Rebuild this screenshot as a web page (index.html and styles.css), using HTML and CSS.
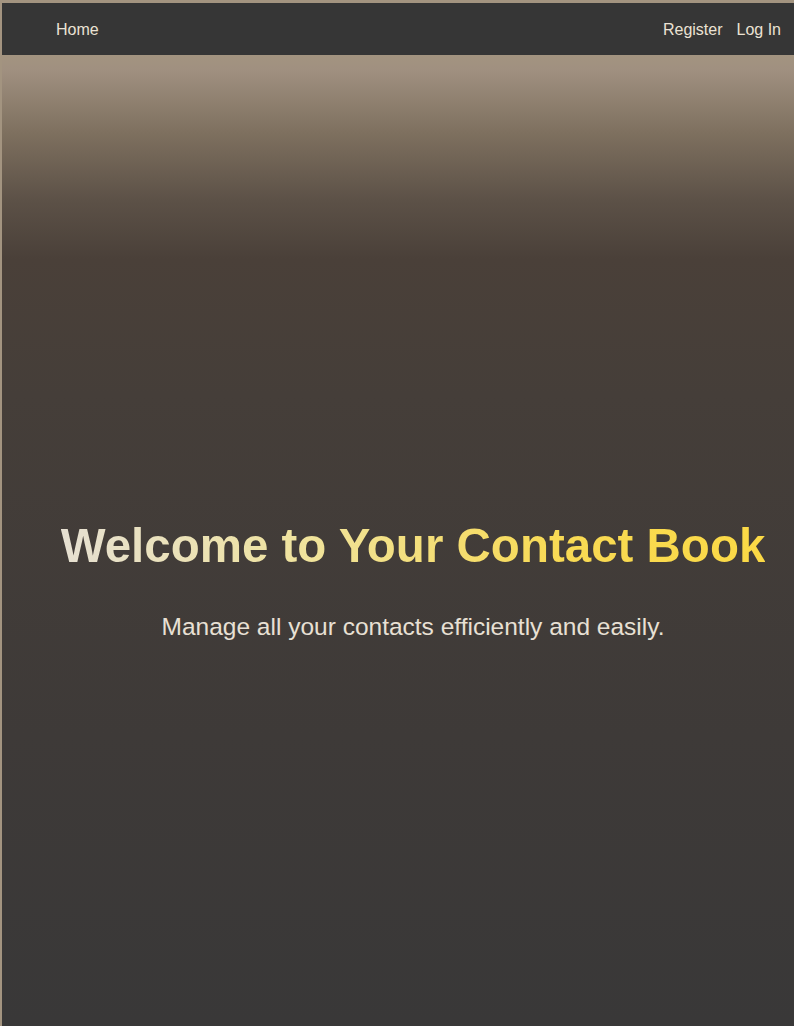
FILE: index.html
```html
<!DOCTYPE html>
<html lang="en">
<head>
<meta charset="utf-8">
<title>Contact Book</title>
<link rel="stylesheet" href="styles.css">
</head>
<body>
<div class="page">
  <nav class="nav">
    <a class="nav-link home" href="#">Home</a>
    <div class="nav-right">
      <a class="nav-link" href="#">Register</a>
      <a class="nav-link" href="#">Log In</a>
    </div>
  </nav>
  <main class="hero">
    <h1 class="title">Welcome to Your Contact Book</h1>
    <p class="subtitle">Manage all your contacts efficiently and easily.</p>
  </main>
</div>
</body>
</html>
```
FILE: styles.css
```css
html, body {
  margin: 0;
  padding: 0;
  height: 100%;
}
body {
  background: #a39480;
  font-family: "Liberation Sans", Arial, sans-serif;
  overflow: hidden;
}
.page {
  padding: 3px 0 0 2px;
  height: 100%;
  box-sizing: border-box;
  display: flex;
  flex-direction: column;
}
.nav {
  background: #363636;
  height: 52px;
  display: flex;
  align-items: center;
  justify-content: space-between;
  padding: 2px 13px 0 54px;
  box-sizing: border-box;
  flex-shrink: 0;
}
.nav-right {
  display: flex;
  gap: 14px;
  margin-right: 0;
}
.nav-link {
  color: #ebe2d4;
  text-decoration: none;
  font-size: 16px;
  line-height: 18px;
}
.home {
  margin-left: 0;
}
.hero {
  flex: 1;
  background: linear-gradient(to bottom, #a39480 0%, #a09080 1.5%, #7e705f 8%, #5c5147 15%, #4a4039 21%, #453e39 35%, #3e3a38 70%, #393838 100%);
  padding: 464px 0 0 30px;
  text-align: center;
}
.title {
  margin: 0;
  font-size: 47.5px;
  line-height: 54px;
  font-weight: bold;
  display: inline-block;
  background: linear-gradient(90deg, #e6e0d2 0%, #f0e39c 35%, #f8da55 70%, #fbd945 100%);
  -webkit-background-clip: text;
  background-clip: text;
  color: transparent;
}
.subtitle {
  margin: 40px 0 0;
  font-size: 24.5px;
  line-height: 28px;
  color: #e8e0d4;
}
```
